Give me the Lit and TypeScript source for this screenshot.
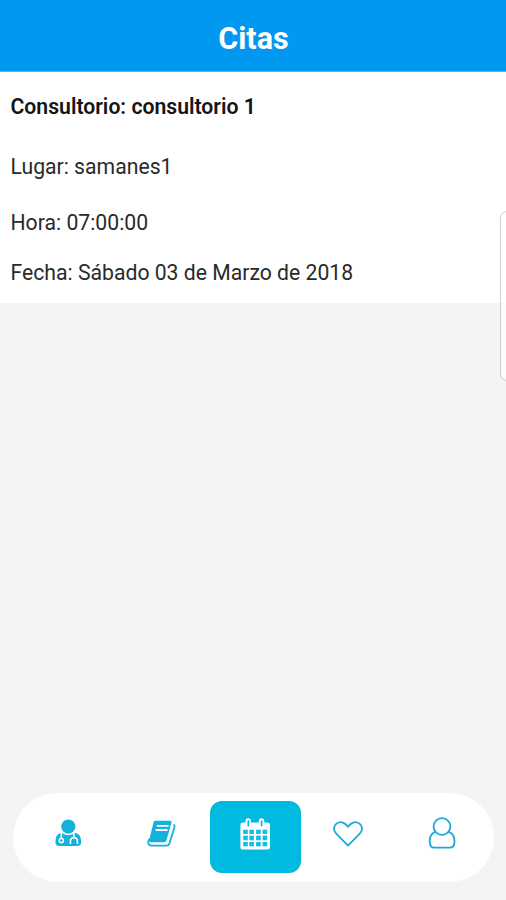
import { LitElement, html, css, svg } from "lit";
import { customElement, state } from "lit/decorators.js";

const icons = [
  // doctor
  svg`<svg viewBox="0 0 30 30"><circle cx="15.3" cy="8.6" r="7.1" fill="#12b2da"/>
    <path fill="#12b2da" d="M8.6 14.8Q2.4 15.6 2.4 24Q2.4 28 6.5 28H24Q28.2 28 28.2 24Q28.2 15.6 22 14.8Q19 17.2 15.3 17.2Q11.6 17.2 8.6 14.8Z"/>
    <path fill="none" stroke="#fff" stroke-width="1.6" d="M8.3 14V20.5M17.4 26V23.4Q17.4 19.6 20.9 19.6Q24.4 19.6 24.4 23.4V26M20.9 19.6V15"/>
    <circle cx="8.3" cy="22.6" r="2.1" fill="none" stroke="#fff" stroke-width="1.5"/></svg>`,
  // book
  svg`<svg viewBox="0 0 30 30"><path fill="#12b2da" d="M9.5 1.8H24.2Q26 1.8 25.5 3.5L20.4 21.4Q19.9 23.2 18.1 23.2H5Q2.8 23.2 3 21.4L7.6 3.2Q8 1.8 9.5 1.8Z"/>
    <path fill="none" stroke="#12b2da" stroke-width="1.8" stroke-linejoin="round" stroke-linecap="round" d="M28 6Q28.9 7 28.5 8.3L23.4 24.5Q22.8 26.6 20.6 26.6H5.6Q2.1 26.6 2.2 23L3 20.5"/>
    <path fill="none" stroke="#fff" stroke-width="1.8" stroke-linecap="round" d="M11.5 6.8H22M10.3 11H20.8"/></svg>`,
  // calendar
  svg`<svg viewBox="0 0 34 34"><path fill="#fff" d="M5 5.5H7.5V4.5Q7.5 1.2 10.3 1.2Q13 1.2 13 4.5V5.5H20.8V4.5Q20.8 1.2 23.6 1.2Q26.3 1.2 26.3 4.5V5.5H29.5Q32 5.5 32 8V30.3Q32 32.6 29.5 32.6H5Q2.4 32.6 2.4 30.3V8Q2.4 5.5 5 5.5Z"/>
    <path fill="none" stroke="#00badf" stroke-width="1.7" stroke-linecap="round" d="M10.3 4.2V8.6M23.6 4.2V8.6"/>
    <g fill="#15bde1">${[12.7, 18.6, 25].map((y, r) => [5.2, 11.3, 18.1, 24.6].map(x =>
      svg`<rect x=${x} y=${y} width="4.6" height=${r === 1 ? 4.7 : 4.3}></rect>`))}</g></svg>`,
  // heart
  svg`<svg viewBox="0 0 34 30"><path fill="none" stroke="#1aa9d8" stroke-width="1.9" stroke-linejoin="round" d="M17 27.5L4.2 14.3Q0 9.6 3.5 5Q6.2 2.2 9.6 2.4Q13.2 2.6 17 7.2Q20.8 2.6 24.4 2.4Q27.8 2.2 30.5 5Q34 9.6 29.8 14.3Z"/></svg>`,
  // person
  svg`<svg viewBox="0 0 30 34"><g fill="none" stroke="#1aa9d8" stroke-width="1.8"><circle cx="15" cy="10.5" r="8.4"/>
    <path d="M8.2 15.8Q2.7 17.8 2.7 25.5Q2.7 31.7 7.4 31.7H22.6Q27.5 31.7 27.5 25.5Q27.5 17.8 21.8 15.8"/></g></svg>`,
];
const names = ["doctor", "book", "calendar", "heart", "person"];
const labels = ["Médicos", "Historial", "Citas", "Favoritos", "Perfil"];

@customElement("app-root")
export class AppRoot extends LitElement {
  static styles = css`
    :host { display: flex; flex-direction: column; height: 900px; position: relative; overflow: hidden;
      background: #f4f4f4; color: #151515; font-family: Roboto, sans-serif; }
    * { box-sizing: border-box; }
    header { height: 72px; background: #0098f0; border-bottom: 1px solid #55b5f1; color: #fff;
      display: flex; justify-content: center; padding: 4px 0 0 1px; }
    h1 { margin: 0; font-size: 30.5px; line-height: 69px; font-weight: 700; }
    .card { background: #fff; height: 231px; padding: 15px 10.5px 0; display: flex; flex-direction: column;
      font-size: 21.2px; font-weight: 400; line-height: 40px; white-space: nowrap; color: #2a2a2a; }
    .card p { margin: 0; }
    .card .name { font-size: 21.2px; font-weight: 600; margin-bottom: 20px; color: #151515; }
    .card .place { margin-bottom: 16px; }
    .card .time { margin-bottom: 10px; }
    .edge { position: absolute; left: 500px; top: 211px; width: 20px; height: 170px;
      border: 1px solid #cfcfcf; border-radius: 7px; background: rgba(255,255,255,.65); }
    nav { margin: auto 12px 18px 13px; height: 89px; border-radius: 45px; background: #fff;
      display: flex; justify-content: center; gap: 2.5px; padding: 8px 0 9px 4px; }
    button { width: 91px; border: 0; padding: 0; background: none; border-radius: 12px;
      display: flex; align-items: center; justify-content: center; }
    .active { background: #00badf; }
    svg { display: block; }
    .doctor svg { width: 30px; height: 30px; margin: -8px 0 0 -2px; }
    .book svg { width: 30px; height: 30px; margin: -7px 0 0 -3px; }
    .calendar svg { width: 34px; height: 34px; margin: -6px 0 0 -2px; }
    .heart svg { width: 32px; height: 28px; margin: -7px 0 0 -2px; }
    .person svg { width: 30px; height: 34px; margin: -8px 0 0 -1px; }
  `;
  @state() private selected = 2;
  render() {
    return html`
      <header><h1>Citas</h1></header>
      <section class="card">
        <p class="name">Consultorio: consultorio 1</p>
        <p class="place">Lugar: samanes1</p>
        <p class="time">Hora: 07:00:00</p>
        <p>Fecha: Sábado 03 de Marzo de 2018</p>
      </section>
      <div class="edge"></div>
      <nav>${icons.map((icon, i) => html`<button aria-label=${labels[i]}
        class="${names[i]} ${this.selected === i ? "active" : ""}"
        @click=${() => (this.selected = i)}>${icon}</button>`)}</nav>`;
  }
}
